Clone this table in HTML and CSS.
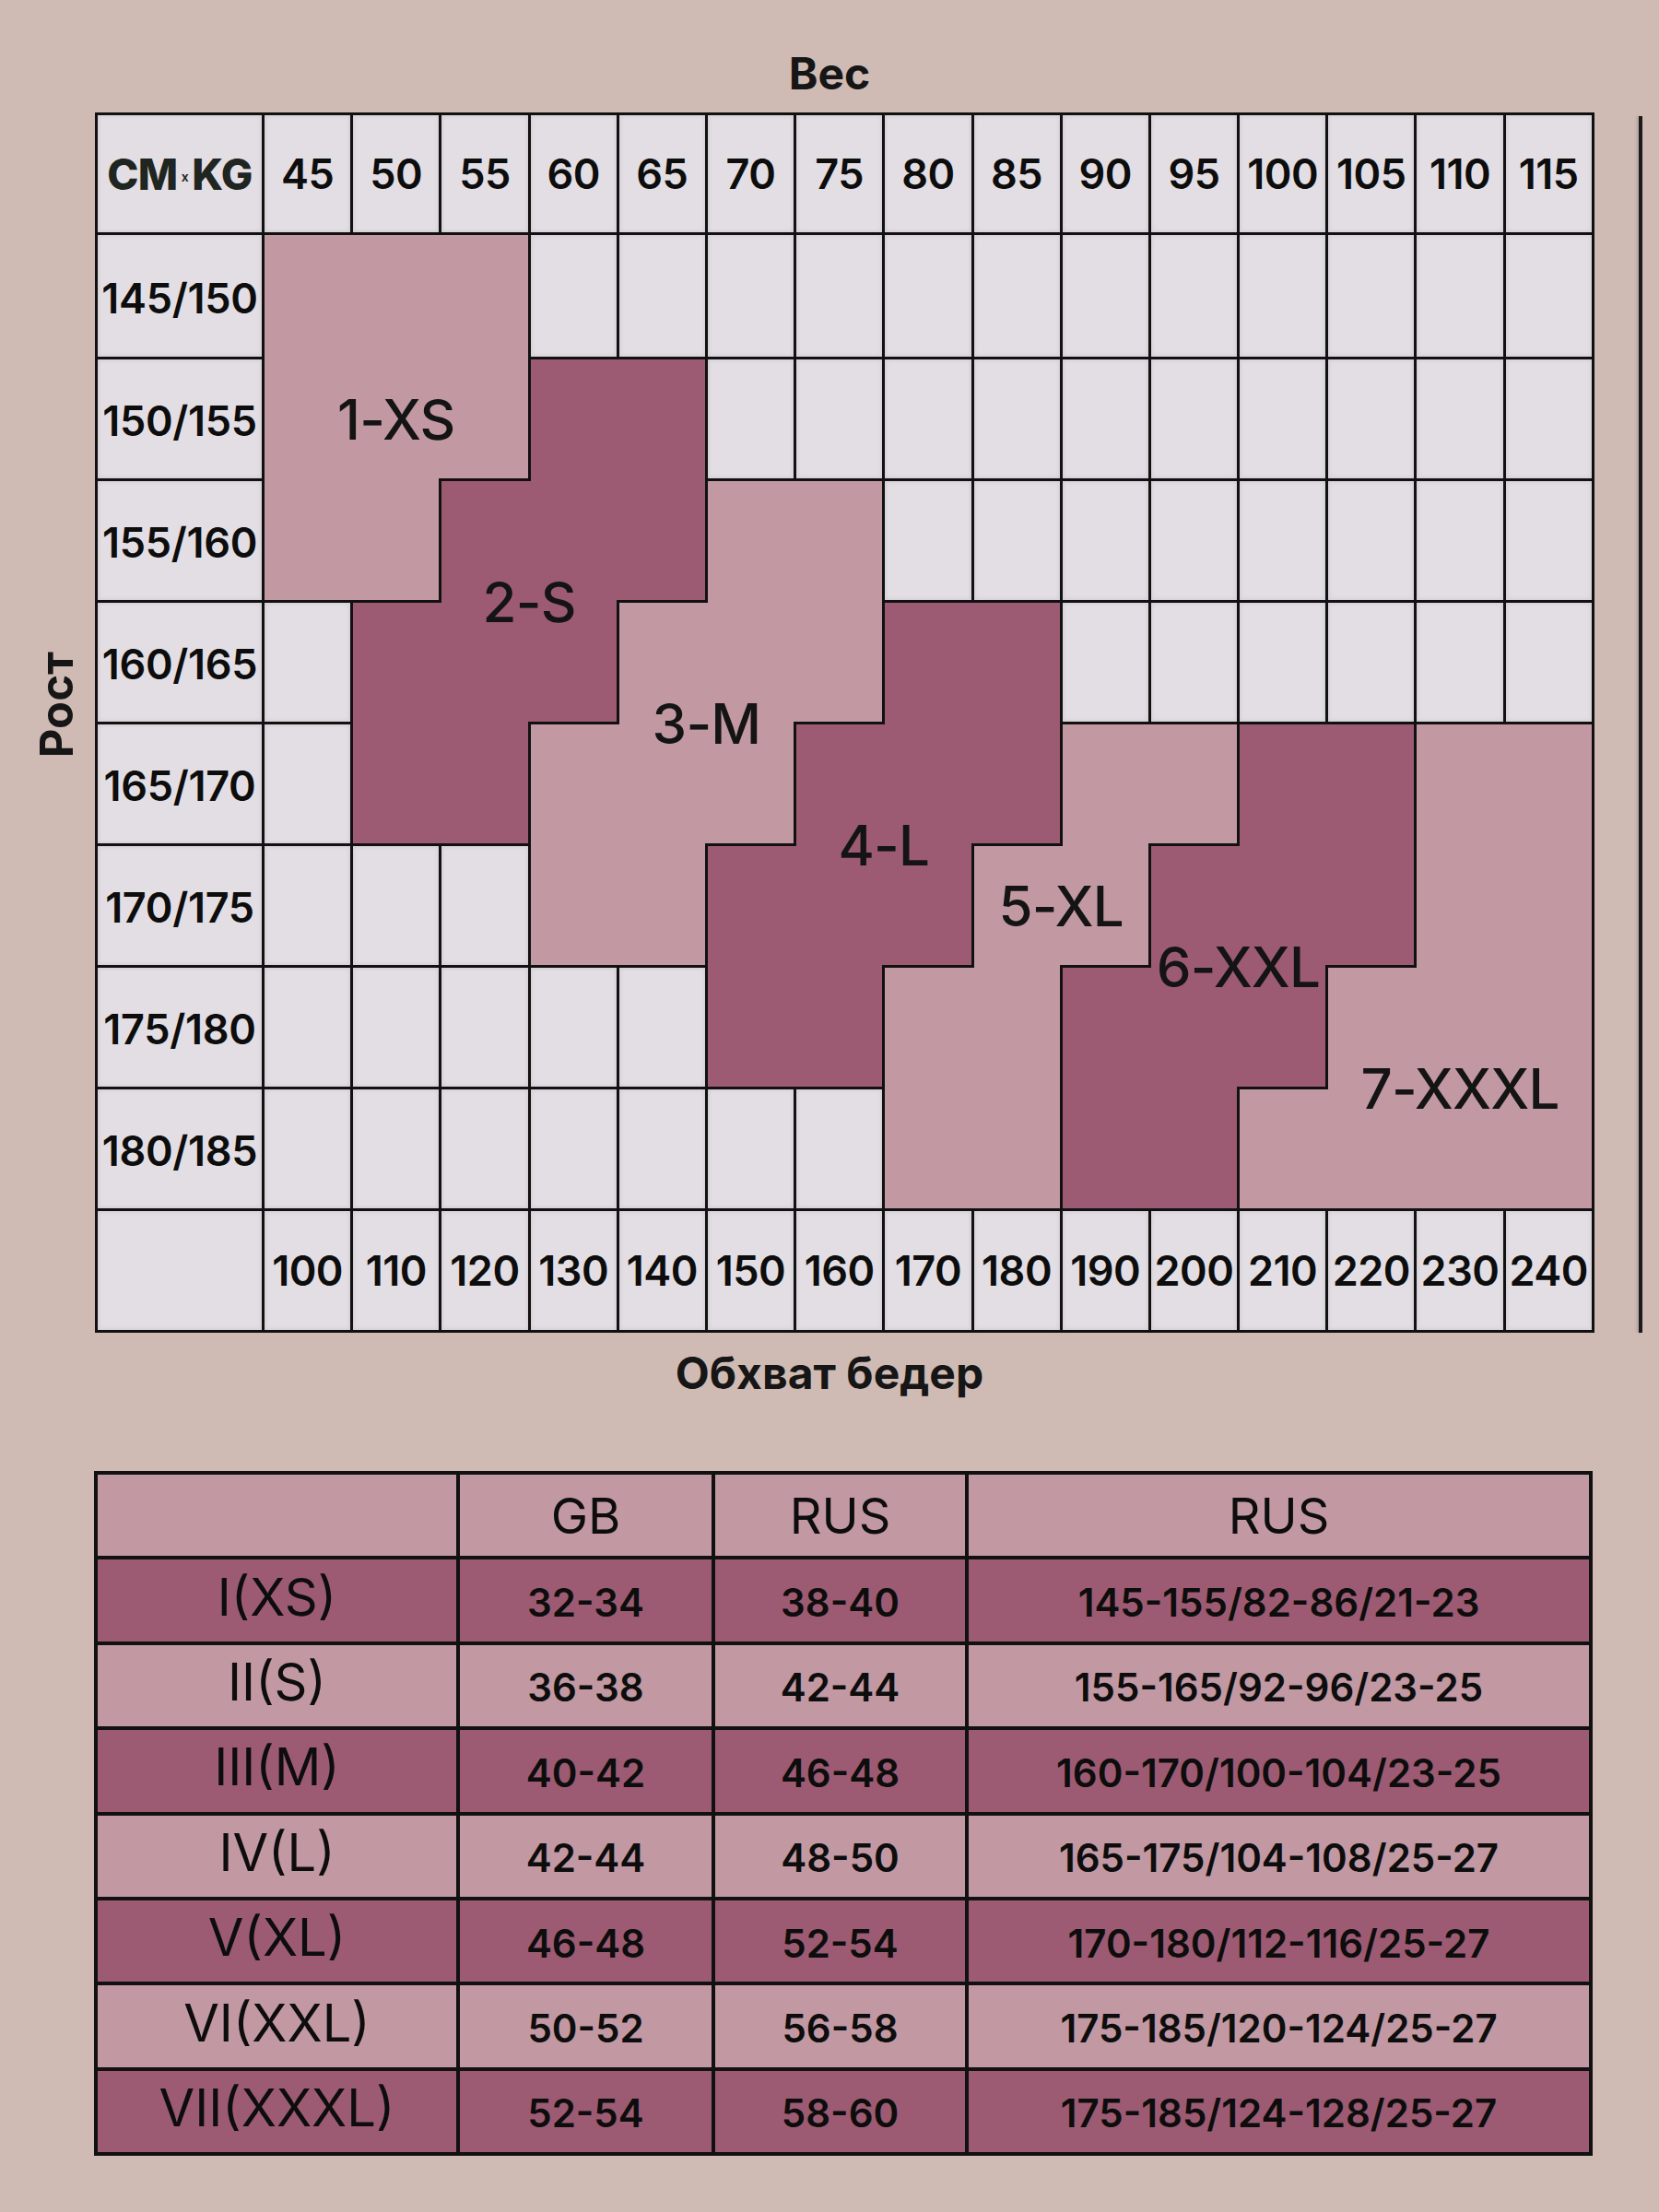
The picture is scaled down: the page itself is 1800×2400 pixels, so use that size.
FILE: index.html
```html
<!DOCTYPE html>
<html lang="ru">
<head>
<meta charset="utf-8">
<title>Размерная сетка</title>
<link rel="stylesheet" href="styles.css">
</head>
<body>
<main class="page">
  <h2 class="axis-title top">Вес</h2>

  <section class="chart-row">
    <div class="axis-y"><span class="axis-title vertical">Рост</span></div>

    <div class="chart">
      <div class="cells">
        <!-- header -->
        <div class="w head corner"><b>CM</b><small>x</small><b>KG</b></div>
        <div class="w head">45</div><div class="w head">50</div><div class="w head">55</div><div class="w head">60</div><div class="w head">65</div><div class="w head">70</div><div class="w head">75</div><div class="w head">80</div><div class="w head">85</div><div class="w head">90</div><div class="w head">95</div><div class="w head">100</div><div class="w head">105</div><div class="w head">110</div><div class="w head">115</div>

        <!-- 145/150 -->
        <div class="w head lbl">145/150</div>
        <div class="a rb"></div><div class="a rb"></div><div class="a b"></div>
        <div class="w"></div><div class="w"></div><div class="w"></div><div class="w"></div><div class="w"></div><div class="w"></div><div class="w"></div><div class="w"></div><div class="w"></div><div class="w"></div><div class="w"></div><div class="w"></div>

        <!-- 150/155 -->
        <div class="w head lbl">150/155</div>
        <div class="a rb"></div><div class="a rx"></div><div class="a"></div>
        <div class="d rb"></div><div class="d b"></div>
        <div class="w"></div><div class="w"></div><div class="w"></div><div class="w"></div><div class="w"></div><div class="w"></div><div class="w"></div><div class="w"></div><div class="w"></div><div class="w"></div>

        <!-- 155/160 -->
        <div class="w head lbl">155/160</div>
        <div class="a r"></div><div class="a"></div>
        <div class="d rb"></div><div class="d rx"></div><div class="d"></div>
        <div class="a rb"></div><div class="a b"></div>
        <div class="w"></div><div class="w"></div><div class="w"></div><div class="w"></div><div class="w"></div><div class="w"></div><div class="w"></div><div class="w"></div>

        <!-- 160/165 -->
        <div class="w head lbl">160/165</div>
        <div class="w"></div>
        <div class="d rb"></div><div class="d rx"></div><div class="d"></div>
        <div class="a rb"></div><div class="a rx"></div><div class="a"></div>
        <div class="d rb"></div><div class="d b"></div>
        <div class="w"></div><div class="w"></div><div class="w"></div><div class="w"></div><div class="w"></div><div class="w"></div>

        <!-- 165/170 -->
        <div class="w head lbl">165/170</div>
        <div class="w"></div>
        <div class="d r"></div><div class="d"></div>
        <div class="a rb"></div><div class="a rx"></div><div class="a"></div>
        <div class="d rb"></div><div class="d rx"></div><div class="d"></div>
        <div class="a rx"></div><div class="a"></div>
        <div class="d rb"></div><div class="d b"></div>
        <div class="a rb"></div><div class="a b"></div>

        <!-- 170/175 -->
        <div class="w head lbl">170/175</div>
        <div class="w"></div><div class="w"></div><div class="w"></div>
        <div class="a r"></div><div class="a"></div>
        <div class="d rb"></div><div class="d rx"></div><div class="d"></div>
        <div class="a rx"></div><div class="a"></div>
        <div class="d rb"></div><div class="d rx"></div><div class="d"></div>
        <div class="a rb"></div><div class="a b"></div>

        <!-- 175/180 -->
        <div class="w head lbl">175/180</div>
        <div class="w"></div><div class="w"></div><div class="w"></div><div class="w"></div><div class="w"></div>
        <div class="d r"></div><div class="d"></div>
        <div class="a rb"></div><div class="a b"></div>
        <div class="d rb"></div><div class="d rx"></div><div class="d"></div>
        <div class="a rb"></div><div class="a rb"></div><div class="a b"></div>

        <!-- 180/185 -->
        <div class="w head lbl">180/185</div>
        <div class="w"></div><div class="w"></div><div class="w"></div><div class="w"></div><div class="w"></div><div class="w"></div><div class="w"></div>
        <div class="a r"></div><div class="a"></div>
        <div class="d r"></div><div class="d"></div>
        <div class="a r"></div><div class="a r"></div><div class="a r"></div><div class="a"></div>

        <!-- footer: hips -->
        <div class="w"></div>
        <div class="w head">100</div><div class="w head">110</div><div class="w head">120</div><div class="w head">130</div><div class="w head">140</div><div class="w head">150</div><div class="w head">160</div><div class="w head">170</div><div class="w head">180</div><div class="w head">190</div><div class="w head">200</div><div class="w head">210</div><div class="w head">220</div><div class="w head">230</div><div class="w head">240</div>
      </div>

      <div class="zones">
        <span class="zone z1">1-XS</span>
        <span class="zone z2">2-S</span>
        <span class="zone z3">3-M</span>
        <span class="zone z4">4-L</span>
        <span class="zone z5">5-XL</span>
        <span class="zone z6">6-XXL</span>
        <span class="zone z7">7-XXXL</span>
      </div>
    </div>

    <div class="rule"></div>
  </section>

  <h2 class="axis-title bottom">Обхват бедер</h2>

  <section class="sizes">
    <div class="a"></div><div class="a t-head">GB</div><div class="a t-head">RUS</div><div class="a t-head">RUS</div>

    <div class="d t-name">I(XS)</div><div class="d t-num">32-34</div><div class="d t-num">38-40</div><div class="d t-num">145-155/82-86/21-23</div>
    <div class="a t-name">II(S)</div><div class="a t-num">36-38</div><div class="a t-num">42-44</div><div class="a t-num">155-165/92-96/23-25</div>
    <div class="d t-name">III(M)</div><div class="d t-num">40-42</div><div class="d t-num">46-48</div><div class="d t-num">160-170/100-104/23-25</div>
    <div class="a t-name">IV(L)</div><div class="a t-num">42-44</div><div class="a t-num">48-50</div><div class="a t-num">165-175/104-108/25-27</div>
    <div class="d t-name">V(XL)</div><div class="d t-num">46-48</div><div class="d t-num">52-54</div><div class="d t-num">170-180/112-116/25-27</div>
    <div class="a t-name">VI(XXL)</div><div class="a t-num">50-52</div><div class="a t-num">56-58</div><div class="a t-num">175-185/120-124/25-27</div>
    <div class="d t-name">VII(XXXL)</div><div class="d t-num">52-54</div><div class="d t-num">58-60</div><div class="d t-num">175-185/124-128/25-27</div>
  </section>
</main>
</body>
</html>
```

FILE: styles.css
```css
* { box-sizing: border-box; }

html, body {
  margin: 0;
  padding: 0;
}

body {
  width: 1800px;
  min-height: 2400px;
  background: #cfbbb4;
  font-family: "Inter", "Roboto", "Liberation Sans", sans-serif;
  color: #111;
}

.page {
  padding-top: 51px;
}

.axis-title {
  margin: 0;
  font-size: 48px;
  font-weight: 700;
  line-height: 58px;
  color: #161616;
  text-align: center;
}

.axis-title.top {
  margin-bottom: 13px;
}

.axis-title.bottom {
  margin-top: 15px;
  height: 58px;
}

/* ---------- chart row ---------- */
.chart-row {
  display: flex;
  align-items: stretch;
}

.axis-y {
  width: 103px;
  display: flex;
  align-items: center;
  justify-content: center;
  padding-left: 20px;
  padding-bottom: 38px;
}

.axis-title.vertical {
  writing-mode: vertical-rl;
  transform: rotate(180deg);
  font-size: 49px;
}

.chart {
  display: grid;
  width: 1627px;
}

.cells,
.zones {
  grid-area: 1 / 1;
  display: grid;
  grid-template-columns: 178px repeat(15, 93.2px);
  grid-template-rows: 127px 132px repeat(8, 129px);
  gap: 3px;
  padding: 3px;
}

.cells {
  background: #111;
}

.cells > div {
  background: var(--bg);
}

.w { --bg: #e2dee3; box-shadow: inset 0 0 5px rgba(70, 50, 60, 0.14); }
.a { --bg: #c298a3; }
.d { --bg: #9c5b72; }

.cells .r  { box-shadow: 3px 0 0 var(--bg); }
.cells .b  { box-shadow: 0 3px 0 var(--bg); }
.cells .rb { box-shadow: 3px 0 0 var(--bg), 0 3px 0 var(--bg), 3px 3px 0 var(--bg); }
.cells .rx { box-shadow: 3px 0 0 var(--bg), 0 3px 0 var(--bg); }

.head {
  display: flex;
  align-items: center;
  justify-content: center;
  font-size: 45px;
  font-weight: 600;
  letter-spacing: -0.5px;
  color: #0d0d0d;
  white-space: nowrap;
}

.head.lbl {
  letter-spacing: -0.3px;
  padding-top: 4px;
}

.corner {
  color: #1f2521;
  font-size: 46px;
  letter-spacing: -0.5px;
}

.corner b {
  font-weight: 800;
}

.corner small {
  font-size: 14px;
  font-weight: 600;
  margin: 6px 4px 0 4px;
}

/* zone labels share the chart grid */
.zones {
  pointer-events: none;
}

.zone {
  display: flex;
  align-items: center;
  justify-content: center;
  font-size: 60px;
  font-weight: 500;
  color: #141414;
  white-space: nowrap;
  letter-spacing: -0.8px;
}

.z1 { grid-column: 3;      grid-row: 3; }
.z2 { grid-column: 4 / 6;  grid-row: 4 / 6; }
.z3 { grid-column: 6 / 8;  grid-row: 5 / 7; }
.z4 { grid-column: 8 / 10; grid-row: 6 / 8; }
.z5 { grid-column: 10 / 12; grid-row: 7; }
.z6 { grid-column: 12 / 14; grid-row: 7 / 9; }
.z7 { grid-column: 15;     grid-row: 8 / 10; }

.rule {
  width: 4px;
  margin: 4px 0 0 48px;
  background: #1c1a1b;
  box-shadow: -2px 0 3px rgba(0, 0, 0, 0.15);
}

/* ---------- size table ---------- */
.sizes {
  display: grid;
  width: 1626px;
  margin: 77px 0 0 102px;
  grid-template-columns: 389px 273px 271px 673px;
  grid-auto-rows: 88.4px;
  gap: 4px;
  padding: 4px;
  background: #111;
}

.sizes > div {
  background: var(--bg);
  display: flex;
  align-items: center;
  justify-content: center;
  white-space: nowrap;
  color: #0d0d0d;
}

.t-head {
  font-size: 54px;
  font-weight: 400;
}

.t-name {
  font-size: 56px;
  font-weight: 400;
  padding-bottom: 8px;
}

.t-num {
  font-size: 42px;
  font-weight: 600;
  padding-top: 4px;
}
```
